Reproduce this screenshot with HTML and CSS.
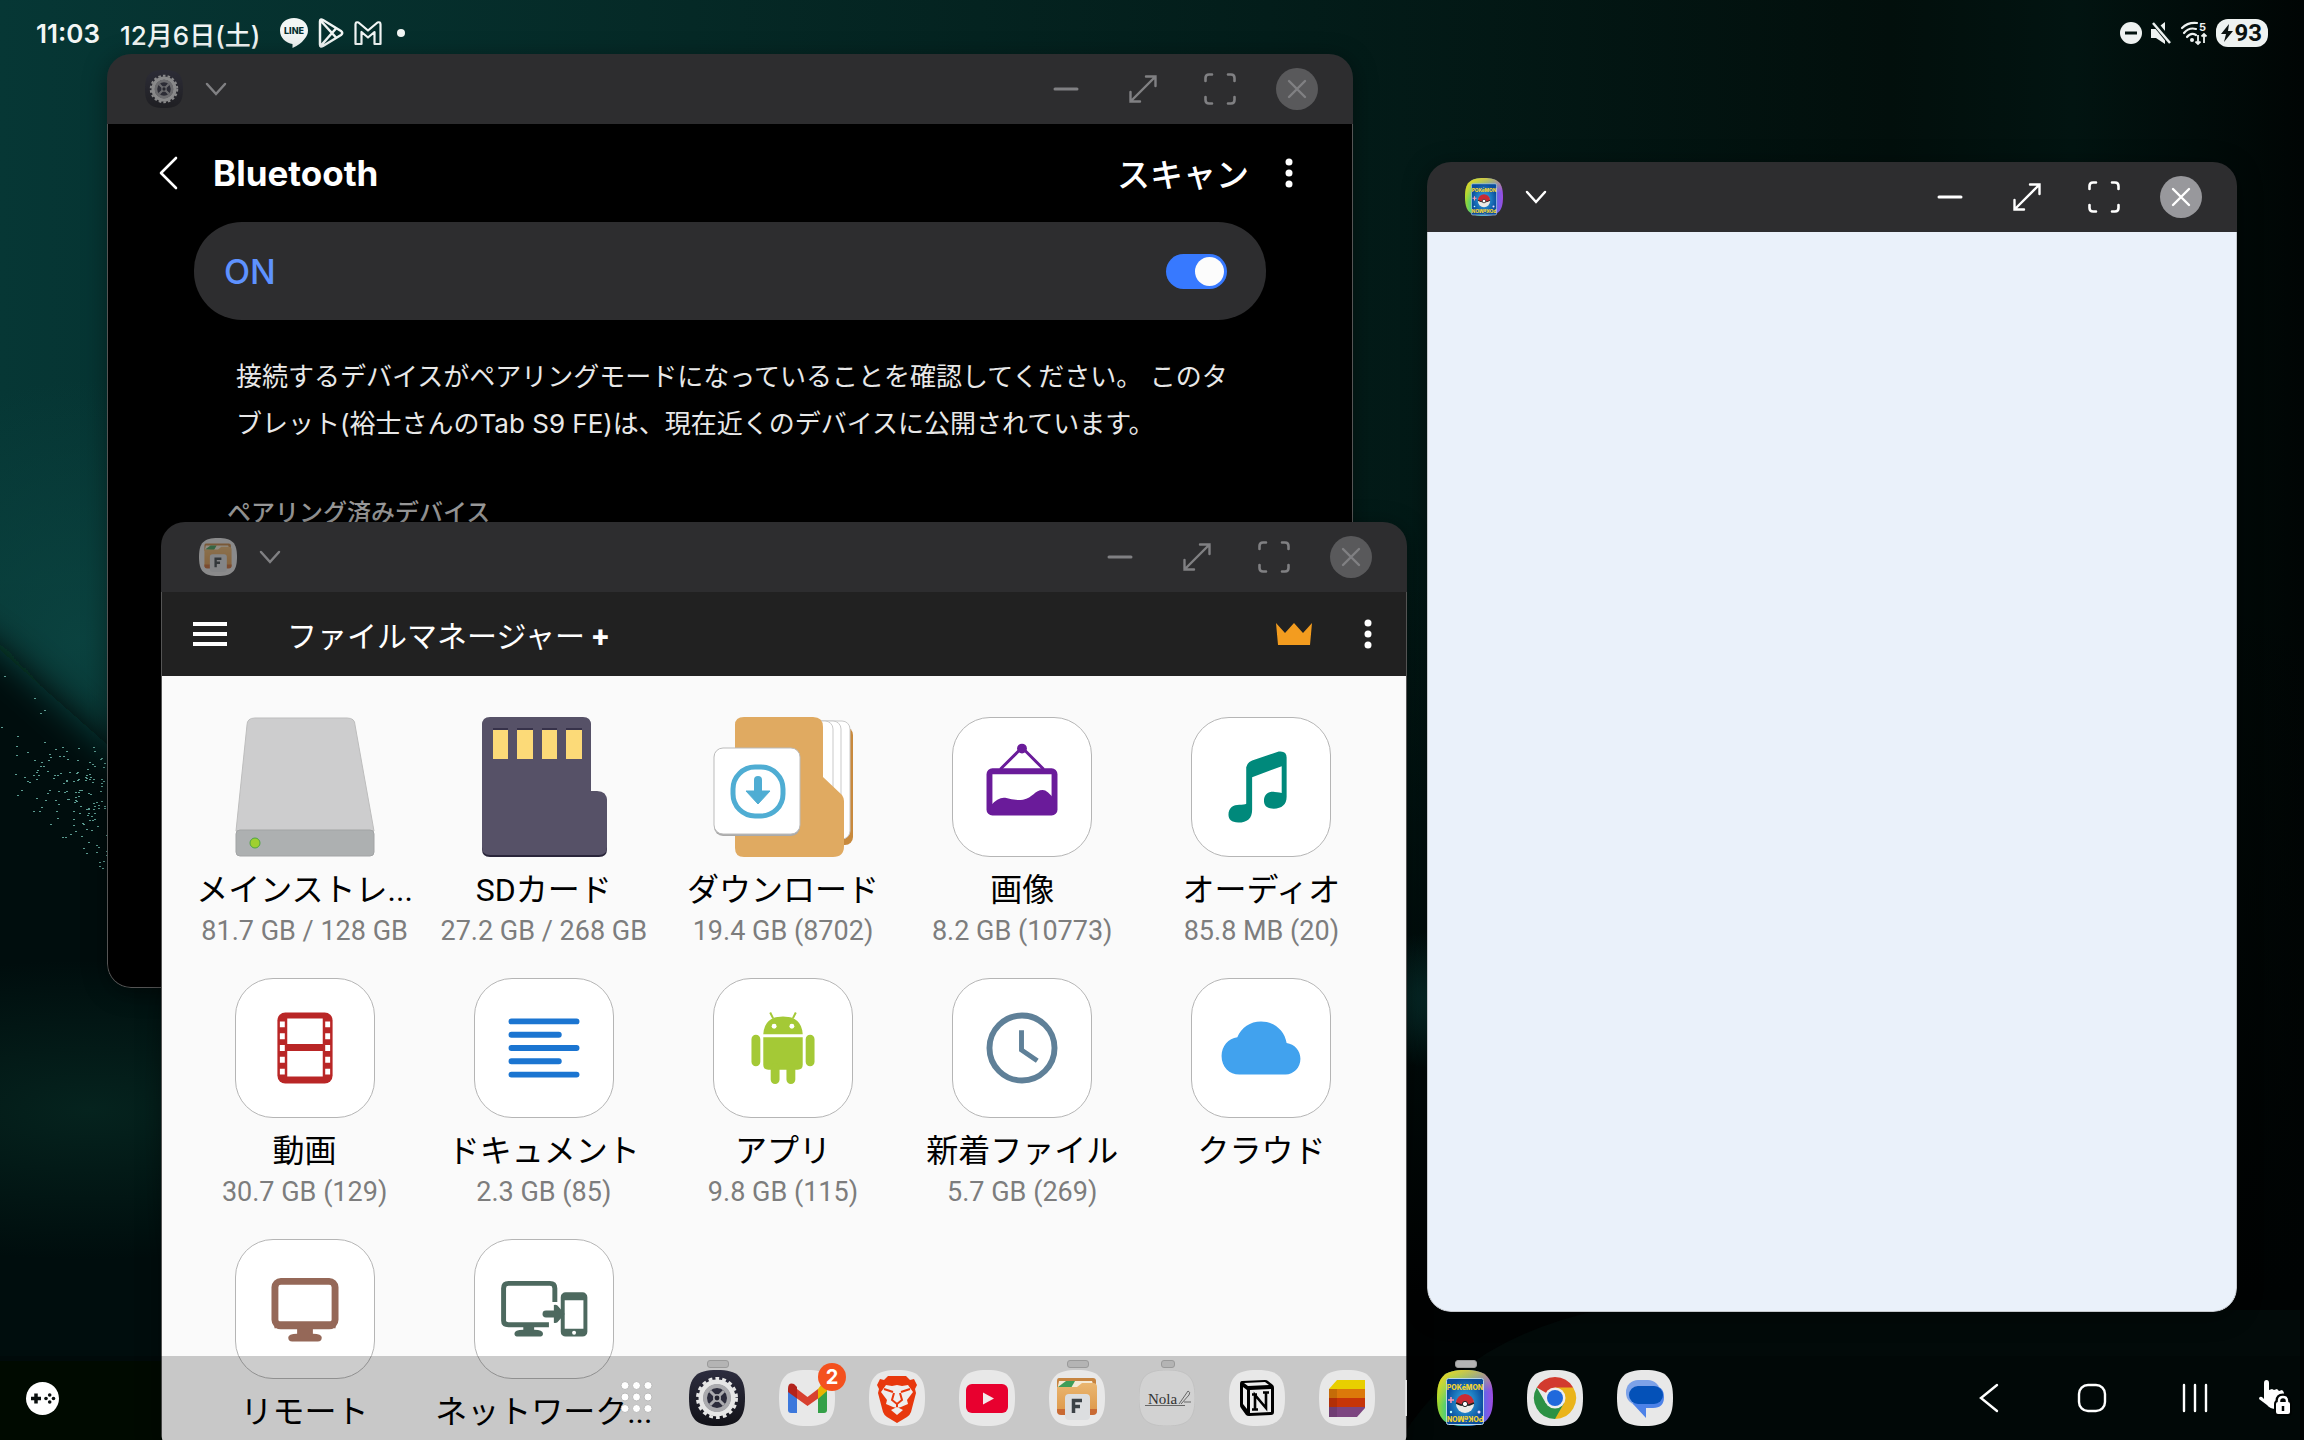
FILE: index.html
```
<!DOCTYPE html>
<html lang="ja">
<head>
    <meta charset="UTF-8">
    <meta name="viewport" content="width=device-width, initial-scale=1.0">
    <title>Tablet Desktop</title>
    <link rel="stylesheet" href="styles.css">
</head>
<body>
    <!-- shared icons -->
    <svg class="defs" aria-hidden="true">
        <defs>
            <linearGradient id="rainbow">
                <stop offset="0" stop-color="#9fd82a"/>
                <stop offset="0.25" stop-color="#22c9a4"/>
                <stop offset="0.75" stop-color="#3f74ee"/>
                <stop offset="1" stop-color="#a04be0"/>
            </linearGradient>
            <linearGradient id="sun" x1="0" y1="0" x2="0.3" y2="1">
                <stop offset="0" stop-color="#ffd21c"/>
                <stop offset="0.6" stop-color="#ffe021" stop-opacity="0"/>
            </linearGradient>
            <radialGradient id="cardBlue">
                <stop offset="0" stop-color="#35b5ec"/>
                <stop offset="1" stop-color="#0b4d9d"/>
            </radialGradient>
            <linearGradient id="navy" x1="0" y1="0" x2="0" y2="1">
                <stop offset="0" stop-color="#2d2d3f"/>
                <stop offset="1" stop-color="#121218"/>
            </linearGradient>
            <linearGradient id="folder" x1="0" y1="0" x2="0" y2="1">
                <stop offset="0" stop-color="#eab670"/>
                <stop offset="1" stop-color="#dd9748"/>
            </linearGradient>
        </defs>

        <symbol id="squircle" viewBox="0 0 56 56">
            <path d="M28 0C49 0 56 7 56 28S49 56 28 56 0 49 0 28 7 0 28 0z"/>
        </symbol>
        <symbol id="app-settings" viewBox="0 0 56 56">
            <use href="#squircle" fill="url(#navy)"/>
            <circle cx="28" cy="28" r="19.5" fill="none" stroke="#e6e6e6" stroke-width="3" stroke-dasharray="3.8 3.1"/>
            <circle cx="28" cy="28" r="16" fill="none" stroke="#e6e6e6" stroke-width="5"/>
            <circle cx="28" cy="28" r="12" fill="#2c2c3c" stroke="#aaaaae" stroke-width="4"/>
            <path d="M21 21l14 14M35 21L21 35" stroke="#aaaaae" stroke-width="3"/>
            <circle cx="28" cy="28" r="4" fill="#aaaaae"/>
            <circle cx="28" cy="28" r="2.4" fill="#22222e"/>
        </symbol>
        <symbol id="app-files" viewBox="0 0 56 56">
            <use href="#squircle" fill="#e8e8e8"/>
            <path d="M10 8h34q3 0 3 3v8H8v-8q0-3 2-3z" fill="#c68440"/>
            <path d="M10 11h33l3 10H8z" fill="#f4ead6"/>
            <path d="M9 17l8-6h9l-4 7z" fill="#3f9d58"/>
            <path d="M8 17h20l5-4h11q4 0 4 4v23q0 4-4 4H12q-4 0-4-4z" fill="url(#folder)"/>
            <path d="M8 39h40v2q0 4-4 4H12q-4 0-4-4z" fill="#c96a33"/>
            <rect x="16" y="24" width="25" height="26" rx="4" fill="#dcdee0"/>
            <path d="M24.500 43V30.500H33M24.500 36.500H31" fill="none" stroke="#3b4247" stroke-width="3.500"/>
        </symbol>
        <symbol id="app-cards" viewBox="0 0 56 56">
            <use href="#squircle" fill="url(#rainbow)"/>
            <use href="#squircle" fill="url(#sun)"/>
            <rect x="9.500" y="8.500" width="37" height="46" rx="2" fill="url(#cardBlue)" stroke="#b9d6e8"/>
            <circle cx="28" cy="34" r="9" fill="#eceae6"/>
            <path d="M19 33a9 9 0 0 1 18 0q-9 4-18 0z" fill="#c92b33"/>
            <path d="M19 33q9 5 18 0" fill="none" stroke="#222" stroke-width="1.500"/>
            <circle cx="28" cy="34" r="2.600" fill="#fff" stroke="#222"/>
            <path d="M14 27v6M11 30h6" stroke="#ff9cb6" stroke-width="1.500"/>
            <circle cx="42" cy="42" r="1.500" fill="#e7d6ff"/>
            <circle cx="14" cy="42" r="1.200" fill="#bff"/>
        </symbol>
        <symbol id="chevron-down" viewBox="0 0 22 14">
            <path d="M2 2l9 10 9-10" fill="none" stroke="currentColor" stroke-width="2.500" stroke-linecap="round"/>
        </symbol>
        <symbol id="minimize" viewBox="0 0 42 42">
            <path d="M10 21h22" stroke="currentColor" stroke-width="3" stroke-linecap="round"/>
        </symbol>
        <symbol id="resize" viewBox="0 0 42 42">
            <path d="M8.500 33.500l25-25M24 8.500h9.500V18M8.500 24v9.500H18" fill="none" stroke="currentColor" stroke-width="2.400" stroke-linecap="round"/>
        </symbol>
        <symbol id="fullscreen" viewBox="0 0 42 42">
            <path d="M6.500 13V10q0-3.500 3.500-3.500h3M29 6.500h3q3.500 0 3.500 3.500v3M35.500 29v3q0 3.500-3.500 3.500h-3M13 35.500h-3q-3.500 0-3.500-3.500v-3" fill="none" stroke="currentColor" stroke-width="2.600" stroke-linecap="round"/>
        </symbol>
        <symbol id="close" viewBox="0 0 42 42">
            <path d="M13 13l16 16M29 13L13 29" stroke="currentColor" stroke-width="2.400" stroke-linecap="round"/>
        </symbol>
        <symbol id="more" viewBox="0 0 10 32">
            <circle cx="5" cy="5" r="3.500"/>
            <circle cx="5" cy="16" r="3.500"/>
            <circle cx="5" cy="27" r="3.500"/>
        </symbol>
    </svg>

    <!-- wallpaper -->
    <svg class="wallpaper" viewBox="0 0 2304 1440" preserveAspectRatio="xMinYMin slice" aria-hidden="true">
        <defs>
            <linearGradient id="bgBase" x1="0" y1="0" x2="1" y2="0">
                <stop offset="0" stop-color="#063735"/>
                <stop offset="0.3" stop-color="#052926"/>
                <stop offset="0.55" stop-color="#031d1a"/>
                <stop offset="0.82" stop-color="#020f0c"/>
                <stop offset="0.9" stop-color="#021411"/>
                <stop offset="1" stop-color="#000504"/>
            </linearGradient>
            <linearGradient id="bgFade" x1="0" y1="0" x2="0" y2="1">
                <stop offset="0.4" stop-color="#000303" stop-opacity="0"/>
                <stop offset="0.9" stop-color="#000303"/>
            </linearGradient>
            <linearGradient id="bgEdge" x1="0" y1="0" x2="0" y2="1">
                <stop offset="0" stop-color="#02120f"/>
                <stop offset="1" stop-color="#000504"/>
            </linearGradient>
            <radialGradient id="bgTeal">
                <stop offset="0" stop-color="#0b4441" stop-opacity="0.9"/>
                <stop offset="1" stop-color="#0b4441" stop-opacity="0"/>
            </radialGradient>
            <radialGradient id="bgLow">
                <stop offset="0" stop-color="#05231e"/>
                <stop offset="1" stop-color="#05231e" stop-opacity="0"/>
            </radialGradient>
            <filter id="soft" x="-50%" y="-50%" width="200%" height="200%"><feGaussianBlur stdDeviation="18"/></filter>
        </defs>
        <rect width="2304" height="1440" fill="url(#bgBase)"/>
        <rect width="2304" height="1440" fill="url(#bgFade)"/>
        <ellipse cx="80" cy="640" rx="260" ry="260" fill="url(#bgTeal)"/>
        <path d="M-60 610L0 650 170 800 500 1000V1600H-60z" fill="url(#bgEdge)" filter="url(#soft)"/>
        <ellipse cx="90" cy="1110" rx="380" ry="150" fill="url(#bgLow)"/>
        <ellipse cx="1450" cy="1000" rx="110" ry="70" fill="url(#bgTeal)" opacity="0.8"/>
        <path d="M1400 1440q60-100 200-130h700v130z" fill="#03110f" opacity="0.5"/>
        <path id="sparks" fill="#5c9d92"/>
    </svg>

    <header class="status-bar">
        <div class="status-left">
            <time>11:03</time>
            <span>12月6日(土)</span>
            <div class="notice-icons">
                <svg width="28" height="36" viewBox="0 0 28 36" role="img" aria-label="LINE">
                    <path d="M14 3C6 3 0 8 0 15.500S6 28 12.500 29v4q8-3.500 12-9 3.500-4 3.500-8.500C28 8 22 3 14 3z" fill="#f2f6f5"/>
                    <text x="14" y="19" text-anchor="middle" class="line-logo">LINE</text>
                </svg>
                <svg width="28" height="36" viewBox="0 0 28 36" role="img" aria-label="Play">
                    <path d="M3 6.500q0-3 3-1.500l18 11q2.500 2 0 4L6 31q-3 1.500-3-1.500zM4 6l15 16.500M4 30.500l15-17" fill="none" stroke="#f2f6f5" stroke-width="2.500" stroke-linejoin="round"/>
                </svg>
                <svg width="28" height="36" viewBox="0 0 28 36" role="img" aria-label="Gmail">
                    <path d="M1.500 9.500q0-3 3-2L14 15.500l9.500-8q3-1 3 2V29h-6V17L14 22.500 7.500 17v12h-6z" fill="none" stroke="#f2f6f5" stroke-width="2.200" stroke-linejoin="round"/>
                </svg>
                <svg width="8" height="36" viewBox="0 0 8 36" aria-hidden="true"><circle cx="4" cy="18" r="4" fill="#f2f6f5"/></svg>
            </div>
        </div>
        <div class="status-right">
            <svg width="22" height="28" viewBox="0 0 22 28" role="img" aria-label="通知オフ">
                <circle cx="11" cy="14" r="11" fill="#eef2f1"/>
                <path d="M5 14h12" stroke="#02120f" stroke-width="3"/>
            </svg>
            <svg width="22" height="28" viewBox="0 0 22 28" role="img" aria-label="ミュート">
                <path d="M1 10h5l9-7v22l-9-6H1z" fill="#eef2f1"/>
                <path d="M3 2l18 22" stroke="#02120f" stroke-width="6"/>
                <path d="M3 4l17 20" stroke="#eef2f1" stroke-width="2.500"/>
            </svg>
            <svg width="28" height="28" viewBox="0 0 28 28" role="img" aria-label="Wi-Fi">
                <path d="M2 9Q8 3 17 4M4 14q5-6 12-4M7 18q4-5 9-2" fill="none" stroke="#eef2f1" stroke-width="2.200" stroke-linecap="round"/>
                <circle cx="12" cy="21" r="2" fill="#eef2f1"/>
                <path d="M18 16v9M15.500 22.500L18 25l2.500-2.500M24 24v-9M21.500 17.500L24 15l2.500 2.500" fill="none" stroke="#eef2f1" stroke-width="1.800"/>
                <text x="19" y="12" class="wifi-gen">5</text>
            </svg>
            <div class="battery">
                <svg width="14" height="20" viewBox="0 0 14 20" aria-hidden="true"><path d="M9 1L1 11h5L4 19l9-11H8z" fill="#0a1211"/></svg>
                <span>93</span>
            </div>
        </div>
    </header>

    <section class="window bluetooth">
        <div class="title-bar">
            <svg class="app-mark"><use href="#app-settings"/></svg>
            <button class="chevron" type="button" aria-label="メニュー"><svg><use href="#chevron-down"/></svg></button>
            <div class="controls">
                <button type="button" aria-label="最小化"><svg><use href="#minimize"/></svg></button>
                <button type="button" aria-label="サイズ変更"><svg><use href="#resize"/></svg></button>
                <button type="button" aria-label="全画面"><svg><use href="#fullscreen"/></svg></button>
                <button type="button" class="close" aria-label="閉じる"><svg><use href="#close"/></svg></button>
            </div>
        </div>
        <div class="window-body">
            <div class="bt-header">
                <button type="button" aria-label="戻る">
                    <svg width="20" height="34" viewBox="0 0 20 34"><path d="M18 2L3 17l15 15" fill="none" stroke="#fff" stroke-width="2.600" stroke-linecap="round" stroke-linejoin="round"/></svg>
                </button>
                <h1>Bluetooth</h1>
                <button type="button" class="scan">スキャン</button>
                <button type="button" class="more" aria-label="その他"><svg><use href="#more"/></svg></button>
            </div>
            <div class="bt-switch">
                <label for="btToggle">ON</label>
                <input type="checkbox" id="btToggle" checked>
            </div>
            <p class="bt-note">接続するデバイスがペアリングモードになっていることを確認してください。 このタブレット(裕士さんのTab S9 FE)は、現在近くのデバイスに公開されています。</p>
            <h2>ペアリング済みデバイス</h2>
        </div>
    </section>

    <section class="window files">
        <div class="title-bar">
            <svg class="app-mark"><use href="#app-files"/></svg>
            <button class="chevron" type="button" aria-label="メニュー"><svg><use href="#chevron-down"/></svg></button>
            <div class="controls">
                <button type="button" aria-label="最小化"><svg><use href="#minimize"/></svg></button>
                <button type="button" aria-label="サイズ変更"><svg><use href="#resize"/></svg></button>
                <button type="button" aria-label="全画面"><svg><use href="#fullscreen"/></svg></button>
                <button type="button" class="close" aria-label="閉じる"><svg><use href="#close"/></svg></button>
            </div>
        </div>
        <div class="window-body">
            <div class="app-bar">
                <button type="button" aria-label="ナビゲーション">
                    <svg width="34" height="26" viewBox="0 0 34 26"><path d="M0 3h34M0 13h34M0 23h34" stroke="#fff" stroke-width="4"/></svg>
                </button>
                <h1>ファイルマネージャー <b>+</b></h1>
                <button type="button" class="crown" aria-label="プレミアム">
                    <svg width="36" height="24" viewBox="0 0 36 24"><path d="M0 1l9 10 9-10 9 10 9-10-2 22H2z" fill="#f39c1f"/></svg>
                </button>
                <button type="button" class="more" aria-label="その他"><svg><use href="#more"/></svg></button>
            </div>
            <div class="tiles">
                <a href="#" class="tile">
                    <svg class="art" viewBox="0 0 140 140">
                        <path d="M20 1h92q8 0 8 7l19 106H1L12 8q0-7 8-7z" fill="#cdcdce" stroke="#bdbdbd"/>
                        <rect x="1" y="113" width="138" height="26" rx="4" fill="#adb0b1" stroke="#a2a4a5"/>
                        <circle cx="20" cy="126" r="5" fill="#9fd030" stroke="#4fa544"/>
                    </svg>
                    <span class="name">メインストレ...</span>
                    <span class="size">81.7 GB / 128 GB</span>
                </a>
                <a href="#" class="tile">
                    <svg class="art" viewBox="0 0 140 140">
                        <path d="M8 10q0-8 8-8h93q8 0 8 8v66h6q10 0 10 10v46q0 8-8 8H16q-8 0-8-8z" fill="#29253a"/>
                        <path d="M8 8q0-8 8-8h93q8 0 8 8v66h6q10 0 10 10v46q0 8-8 8H16q-8 0-8-8z" fill="#565167"/>
                        <path d="M19 11h15v5H19zM43 11h16v5H43zM68 11h15v5H68zM92 11h16v5H92z" fill="#37324a"/>
                        <path d="M19 13h15v29H19zM43 13h16v29H43zM68 13h15v29H68zM92 13h16v29H92z" fill="#fcda78"/>
                    </svg>
                    <span class="name">SDカード</span>
                    <span class="size">27.2 GB / 268 GB</span>
                </a>
                <a href="#" class="tile">
                    <svg class="art" viewBox="0 0 140 140">
                        <rect x="100" y="10" width="40" height="118" rx="8" fill="#c8893c"/>
                        <rect x="80" y="4" width="57" height="118" rx="8" fill="#fff" stroke="#c9c9c9"/>
                        <rect x="75" y="4" width="53" height="118" rx="8" fill="#fff" stroke="#c9c9c9"/>
                        <rect x="70" y="4" width="50" height="118" rx="8" fill="#fff" stroke="#c9c9c9"/>
                        <path d="M22 8q0-8 9-8h69q10 0 10 10v50l19 18q2 3 2 6v45q0 11-11 11H31q-9 0-9-9z" fill="#e0aa61"/>
                        <rect x="1" y="32" width="86" height="87" rx="9" fill="#aaa"/>
                        <rect x="1" y="31" width="86" height="86" rx="9" fill="#fff" stroke="#bbb"/>
                        <rect x="20" y="50" width="50" height="49" rx="22" fill="none" stroke="#4fadd3" stroke-width="5"/>
                        <path d="M45 60v20M33 74h24L45 87z" fill="#4fadd3" stroke="#4fadd3"/>
                        <path d="M45 63v12" stroke="#4fadd3" stroke-width="8" stroke-linecap="round"/>
                    </svg>
                    <span class="name">ダウンロード</span>
                    <span class="size">19.4 GB (8702)</span>
                </a>
                <a href="#" class="tile">
                    <svg class="art framed" viewBox="0 0 140 140">
                        <path d="M48 52l22-22 22 22" fill="none" stroke="#6a1b9a" stroke-width="3"/>
                        <circle cx="70" cy="31" r="5" fill="#6a1b9a"/>
                        <rect x="37" y="54" width="66" height="42" rx="3" fill="none" stroke="#6a1b9a" stroke-width="6"/>
                        <path d="M38 89q8-9 15-8 9 3 18 2c10-2 12-10 20-10q5 0 12 10v13H38z" fill="#6a1b9a"/>
                    </svg>
                    <span class="name">画像</span>
                    <span class="size">8.2 GB (10773)</span>
                </a>
                <a href="#" class="tile">
                    <svg class="art framed" viewBox="0 0 140 140">
                        <path d="M55 50q1-5 6-7l27-9q8-1 8 6v40c0 8-5 12-13 12-7 0-10-3-10-8 0-7 5-10 11-9 4 0 6 1 7 1V49L61 60v33c0 9-5 13-14 13-7 0-10-3-10-8 0-7 5-10 11-10 3 0 6 0 7-1z" fill="#00897b"/>
                    </svg>
                    <span class="name">オーディオ</span>
                    <span class="size">85.8 MB (20)</span>
                </a>
                <a href="#" class="tile">
                    <svg class="art framed" viewBox="0 0 140 140">
                        <rect x="42" y="34" width="56" height="72" rx="8" fill="#b92626"/>
                        <path d="M52 40h36v26H52zM52 73h36v26H52z" fill="#fff"/>
                        <path d="M47 43v54M93 43v54" stroke="#fff" stroke-width="5" stroke-dasharray="6 6"/>
                    </svg>
                    <span class="name">動画</span>
                    <span class="size">30.7 GB (129)</span>
                </a>
                <a href="#" class="tile">
                    <svg class="art framed" viewBox="0 0 140 140">
                        <path d="M37 43h66M37 56.500h48M37 70h66M37 83.500h48M37 97h66" stroke="#1b75d1" stroke-width="6" stroke-linecap="round"/>
                    </svg>
                    <span class="name">ドキュメント</span>
                    <span class="size">2.3 GB (85)</span>
                </a>
                <a href="#" class="tile">
                    <svg class="art framed" viewBox="0 0 140 140">
                        <path d="M60 40l-3-6M80 40l3-6" stroke="#a4c936" stroke-width="2"/>
                        <path d="M50 56q1-18 20-18t20 18z" fill="#a4c936"/>
                        <circle cx="61" cy="48" r="2.500" fill="#fff"/>
                        <circle cx="79" cy="48" r="2.500" fill="#fff"/>
                        <path d="M50 59h40v28q0 5-5 5H55q-5 0-5-5z" fill="#a4c936"/>
                        <path d="M42.500 61v23M97.500 61v23M62 90v12M78 90v12" stroke="#a4c936" stroke-width="9" stroke-linecap="round"/>
                    </svg>
                    <span class="name">アプリ</span>
                    <span class="size">9.8 GB (115)</span>
                </a>
                <a href="#" class="tile">
                    <svg class="art framed" viewBox="0 0 140 140">
                        <circle cx="70" cy="70" r="33" fill="none" stroke="#5f8098" stroke-width="6"/>
                        <path d="M69.500 52v20l16 11" fill="none" stroke="#5f8098" stroke-width="5"/>
                    </svg>
                    <span class="name">新着ファイル</span>
                    <span class="size">5.7 GB (269)</span>
                </a>
                <a href="#" class="tile">
                    <svg class="art framed" viewBox="0 0 140 140">
                        <path d="M48 97c-10 0-18-8-18-19 0-10 7-18 16-19 4-10 13-16 24-16 13 0 24 9 26 22 8 1 14 8 14 16 0 9-7 16-15 16z" fill="#41a2ee"/>
                    </svg>
                    <span class="name">クラウド</span>
                </a>
                <a href="#" class="tile">
                    <svg class="art framed" viewBox="0 0 140 140">
                        <rect x="39.500" y="42" width="61" height="45" rx="6" fill="none" stroke="#956858" stroke-width="7"/>
                        <path d="M62 89h16v6q9 0 9 4t-4 4H57q-4 0-4-4t9-4z" fill="#956858"/>
                        <path d="M39 86h62" stroke="#956858" stroke-width="7"/>
                    </svg>
                    <span class="name">リモート</span>
                </a>
                <a href="#" class="tile">
                    <svg class="art framed" viewBox="0 0 140 140">
                        <path d="M81 63V49q0-5-5-5H34q-5 0-5 5v33q0 4 5 4h41" fill="none" stroke="#4d695f" stroke-width="5"/>
                        <path d="M49 87h11v4q9 0 9 4 0 3-4 3H44q-4 0-4-3 0-4 9-4z" fill="#4d695f"/>
                        <rect x="89" y="55" width="23" height="41" rx="3" fill="#fff" stroke="#4d695f" stroke-width="4"/>
                        <path d="M88 58h24M88 93h24" stroke="#4d695f" stroke-width="6"/>
                        <circle cx="100.500" cy="94" r="2" fill="#fff"/>
                        <path d="M72 75h10" stroke="#4d695f" stroke-width="7" stroke-linecap="round"/>
                        <path d="M80 66q3-1 5 2l6 7-6 7q-2 3-5 2z" fill="#4d695f"/>
                    </svg>
                    <span class="name">ネットワーク...</span>
                </a>
            </div>
        </div>
    </section>

    <section class="window game active">
        <div class="title-bar">
            <svg class="app-mark" viewBox="0 0 56 56">
                <use href="#app-cards"/>
                <text x="28" y="20" text-anchor="middle" class="card-logo">POKéMON</text>
                <text x="-28" y="-46" text-anchor="middle" class="card-logo" transform="rotate(180)">POKéMON</text>
            </svg>
            <button class="chevron" type="button" aria-label="メニュー"><svg><use href="#chevron-down"/></svg></button>
            <div class="controls">
                <button type="button" aria-label="最小化"><svg><use href="#minimize"/></svg></button>
                <button type="button" aria-label="サイズ変更"><svg><use href="#resize"/></svg></button>
                <button type="button" aria-label="全画面"><svg><use href="#fullscreen"/></svg></button>
                <button type="button" class="close" aria-label="閉じる"><svg><use href="#close"/></svg></button>
            </div>
        </div>
        <div class="window-body"></div>
    </section>

    <nav class="taskbar">
        <button type="button" class="gamepad" aria-label="ゲーム">
            <svg width="33" height="33" viewBox="0 0 33 33">
                <circle cx="16.500" cy="16.500" r="16.500" fill="#fff"/>
                <path d="M5 16.500h10M10 11.500v10" stroke="#0a0f0e" stroke-width="3.500"/>
                <g fill="#0a0f0e"><circle cx="20" cy="16.500" r="1.800"/><circle cx="27.500" cy="16.500" r="1.800"/><circle cx="23.700" cy="13" r="1.800"/><circle cx="23.700" cy="20" r="1.800"/></g>
            </svg>
        </button>
        <div class="dock">
            <button type="button" aria-label="アプリ一覧">
                <svg width="36" height="36" viewBox="0 0 36 36" fill="#fff" stroke="#bababa">
                    <circle cx="6" cy="5.500" r="4"/><circle cx="17.500" cy="5.500" r="4"/><circle cx="29" cy="5.500" r="4"/>
                    <circle cx="6" cy="17" r="4"/><circle cx="17.500" cy="17" r="4"/><circle cx="29" cy="17" r="4"/>
                    <circle cx="6" cy="28.500" r="4"/><circle cx="17.500" cy="28.500" r="4"/><circle cx="29" cy="28.500" r="4"/>
                </svg>
            </button>
            <button type="button" class="app running" aria-label="設定"><svg><use href="#app-settings"/></svg></button>
            <button type="button" class="app" aria-label="Gmail">
                <svg viewBox="0 0 56 56">
                    <use href="#squircle" fill="#e8e8e8"/>
                    <path d="M9 19h9v24h-6q-3 0-3-3z" fill="#3c78dc"/>
                    <path d="M39 19h9v21q0 3-3 3h-6z" fill="#34a048"/>
                    <path d="M39 19l3-4q6-3 6 4v2l-9 8z" fill="#e8b400"/>
                    <path d="M18 19l10.500 8L39 19v9.500L28.500 36 18 28.500z" fill="#d8402f"/>
                    <path d="M9 19q0-7 6-5l3 3v11.500L9 22z" fill="#b3231c"/>
                </svg>
                <span class="badge">2</span>
            </button>
            <button type="button" class="app" aria-label="Brave">
                <svg viewBox="0 0 56 56">
                    <use href="#squircle" fill="#e8e8e8"/>
                    <path d="M19 6h18l4 4 4-1 3 6-2 4 1 4-5 19q-1 3-4 5l-10 6-10-6q-3-2-4-5L9 23l1-4-2-4 3-6 4 1z" fill="#e8380d"/>
                    <path d="M17 15l6 1 5-1 5 1 6-1 5 7-6 8 1 4-7 3-4 1-4-1-7-3 1-4-6-8z" fill="#eee"/>
                    <path d="M15 19l9 3M41 19l-9 3M25 23l-2 7 5 4 5-4-2-7M28 34v4" fill="none" stroke="#e8380d" stroke-width="2"/>
                    <path d="M22 40l6-3 6 3-6 5z" fill="#eee"/>
                </svg>
            </button>
            <button type="button" class="app" aria-label="YouTube">
                <svg viewBox="0 0 56 56">
                    <use href="#squircle" fill="#e8e8e8"/>
                    <rect x="7" y="14" width="42" height="29" rx="6" fill="#e8002f"/>
                    <path d="M24 22.500l11 6-11 6z" fill="#f3e9eb"/>
                </svg>
            </button>
            <button type="button" class="app running" aria-label="ファイルマネージャー"><svg><use href="#app-files"/></svg></button>
            <button type="button" class="app running small" aria-label="Nola">
                <svg viewBox="0 0 56 56">
                    <use href="#squircle" fill="#d2d2d2" stroke="#c2c2c2"/>
                    <text x="9" y="34" class="nola-logo">Nola</text>
                    <path d="M6 35.500h40M40 34l9-13q3 1 1 4L42 34M45 32h7" fill="none" stroke="#666"/>
                </svg>
            </button>
            <button type="button" class="app" aria-label="Notion">
                <svg viewBox="0 0 56 56">
                    <use href="#squircle" fill="#e8e8e8"/>
                    <path d="M13 11l23-1q2 0 3 1l5 4q1 1 1 3v24q0 3-3 3l-22 1q-2 0-3-1l-5-7q-1-1-1-3V14q0-3 2-3z" fill="#000"/>
                    <path d="M15 13l21-1 4 3-21 1zM14 17l4 3v19l-4-5zM21 20l21-1v23l-21 1z" fill="#eee"/>
                    <path d="M26 39V25l11 13V23M23 24.500h5M34 22.500h6M23 39.500h6" fill="none" stroke="#000" stroke-width="2.600"/>
                </svg>
            </button>
            <button type="button" class="app" aria-label="Lifebear">
                <svg viewBox="0 0 56 56">
                    <use href="#squircle" fill="#e8e8e8"/>
                    <path d="M10 19l8-9h28v9z" fill="#e8cf00"/>
                    <path d="M10 19h36v9H10z" fill="#dc790a"/>
                    <path d="M10 28h36v9H10z" fill="#c73508"/>
                    <path d="M10 37h36v1l-8 9H10z" fill="#7c4580"/>
                    <path d="M10 19h8v28h-8z" fill="#000" opacity="0.100"/>
                </svg>
            </button>
            <span class="divider"></span>
            <button type="button" class="app running" aria-label="カードゲーム">
                <svg viewBox="0 0 56 56">
                    <use href="#app-cards"/>
                    <text x="28" y="20" text-anchor="middle" class="card-logo">POKéMON</text>
                    <text x="-28" y="-46" text-anchor="middle" class="card-logo" transform="rotate(180)">POKéMON</text>
                </svg>
            </button>
            <button type="button" class="app" aria-label="Chrome">
                <svg viewBox="0 0 56 56">
                    <use href="#squircle" fill="#e8e8e8"/>
                    <path d="M28 28L9.800 17.500A21 21 0 0 1 46.200 17.500z" fill="#d23a2e"/>
                    <path d="M28 28L28 17.500H46.200A21 21 0 0 1 28 49z" fill="#eab41a"/>
                    <path d="M28 49A21 21 0 0 1 9.800 17.500L18.900 33.200 37 33.200z" fill="#2c9144"/>
                    <circle cx="28" cy="28" r="10.500" fill="#eee"/>
                    <circle cx="28" cy="28" r="8" fill="#2069dc"/>
                </svg>
            </button>
            <button type="button" class="app" aria-label="メッセージ">
                <svg viewBox="0 0 56 56">
                    <use href="#squircle" fill="#e8e8e8"/>
                    <rect x="9" y="10" width="34" height="25" rx="12" fill="#7da2e8"/>
                    <path d="M20 16h16q11 0 11 11t-11 11h-7v10L16 34z" fill="#4d82e8"/>
                    <rect x="12" y="16" width="34" height="18" rx="9" fill="#0451b8"/>
                </svg>
            </button>
        </div>
        <div class="system-nav">
            <button type="button" aria-label="戻る">
                <svg width="30" height="30" viewBox="0 0 30 30" fill="none" stroke="#fff" stroke-width="2.400" stroke-linecap="round"><path d="M23 2L7 15l16 13"/></svg>
            </button>
            <button type="button" aria-label="ホーム">
                <svg width="30" height="30" viewBox="0 0 30 30" fill="none" stroke="#fff" stroke-width="2.400"><rect x="2" y="2" width="26" height="26" rx="9"/></svg>
            </button>
            <button type="button" aria-label="履歴">
                <svg width="30" height="30" viewBox="0 0 30 30" fill="none" stroke="#fff" stroke-width="2.400" stroke-linecap="round"><path d="M4 2v26M15 2v26M26 2v26"/></svg>
            </button>
            <button type="button" class="touch-lock" aria-label="タッチロック">
                <svg width="34" height="38" viewBox="0 0 34 38">
                    <path d="M6 4q0-3 2.500-3T11 4v7l3-1 2 1 3-1 2 2 3-1q3 2 2 8l-8 11q-6 0-9-4L1 20q0-3 3-2l2 2z" fill="#fff"/>
                    <path d="M21 25v-3q0-4 4-4t4 4v3" fill="none" stroke="#000403" stroke-width="7"/>
                    <rect x="17" y="22" width="16" height="14" rx="3" fill="#fff" stroke="#000403" stroke-width="2"/>
                    <path d="M21 25v-3q0-4 4-4t4 4v3" fill="none" stroke="#fff" stroke-width="2.500"/>
                    <path d="M25 27v5" stroke="#000403" stroke-width="2.500"/>
                </svg>
            </button>
        </div>
    </nav>

    <script>
        // scatter the sparks along the lower edge of the teal glow
        let seed = 11;
        function rand() {
            seed = (seed * 16807) % 2147483647;
            return seed / 2147483647;
        }

        let d = '';
        for (let i = 0; i < 210; i++) {
            const x = Math.round(Math.sqrt(rand()) * 125);
            const spread = (rand() + rand() - 1) * 75;
            const y = Math.round(745 + x * 0.6 + spread);
            d += `M${x} ${y}h2v1h-2z`;
        }
        document.getElementById('sparks').setAttribute('d', d);
    </script>
</body>
</html>
```
FILE: styles.css
```
* {
    box-sizing: border-box;
}

body {
    position: relative;
    min-height: 100vh;
    margin: 0;
    overflow: hidden;
    background-color: #000403;
    font-family: Inter, "Noto Sans CJK JP", sans-serif;
    color: #ffffff;
}

button {
    padding: 0;
    border: none;
    background: none;
    color: inherit;
    font: inherit;
    cursor: pointer;
}

svg {
    display: block;
}

h1, h2, p {
    margin: 0;
}

.defs {
    position: absolute;
    width: 0;
    height: 0;
}

.wallpaper {
    position: absolute;
    width: 100%;
    height: 100%;
}

/* status bar */
.status-bar {
    position: relative;
    display: flex;
    align-items: center;
    justify-content: space-between;
    height: 54px;
    padding: 12px 36px 0;
    font-size: 26px;
    font-weight: 600;
    color: #f2f6f5;
}

.status-left {
    display: flex;
    align-items: center;
    gap: 20px;
}

.status-left span {
    font-weight: 500;
}

.notice-icons {
    display: flex;
    gap: 9px;
}

.notice-icons svg:last-child {
    margin-left: 6px;
}

.line-logo {
    font-size: 9px;
    font-weight: 800;
    fill: #06302e;
}

.status-right {
    display: flex;
    align-items: center;
    gap: 8px;
}

.wifi-gen {
    font-size: 11px;
    font-weight: 700;
    fill: #eef2f1;
}

.battery {
    display: flex;
    align-items: center;
    height: 28px;
    padding: 0 6px 0 4px;
    border-radius: 12px;
    background-color: #eef2f1;
    color: #0a1211;
    font-family: Roboto, sans-serif;
    font-size: 24px;
    font-weight: 700;
}

/* windows */
.window {
    position: absolute;
    display: flex;
    flex-direction: column;
    overflow: hidden;
    border-radius: 24px;
    box-shadow: 0 4px 24px rgba(0, 0, 0, 0.4);
}

.title-bar {
    display: flex;
    flex-shrink: 0;
    align-items: center;
    height: 70px;
    padding: 0 35px 0 38px;
    background-color: #2d2d2f;
    color: #808083;
}

.app-mark {
    width: 38px;
    height: 38px;
    opacity: 0.5;
}

.chevron {
    margin-left: 22px;
}

.chevron svg {
    width: 22px;
    height: 14px;
}

.controls {
    display: flex;
    gap: 35px;
    margin-left: auto;
}

.controls svg {
    width: 42px;
    height: 42px;
}

.close {
    border-radius: 50%;
    background-color: #59595b;
}

.active .title-bar {
    color: #ffffff;
}

.active .app-mark {
    opacity: 1;
}

.active .close {
    background-color: #98989c;
}

.window-body {
    flex: 1;
    border: 1px solid #555555;
    border-top: none;
    border-radius: 0 0 24px 24px;
}

.more svg {
    width: 10px;
    height: 32px;
    fill: #ffffff;
}

/* bluetooth */
.bluetooth {
    top: 54px;
    left: 107px;
    width: 1246px;
    height: 934px;
}

.bluetooth .window-body {
    background-color: #000000;
}

.bt-header {
    display: flex;
    align-items: center;
    height: 98px;
    padding: 0 58px 0 50px;
}

.bt-header h1 {
    flex: 1;
    margin-left: 35px;
    font-size: 35px;
    font-weight: 700;
}

.scan {
    margin-right: 35px;
    font-size: 33px;
    font-weight: 500;
}

.bt-switch {
    display: flex;
    align-items: center;
    justify-content: space-between;
    height: 98px;
    margin: 0 86px;
    padding: 0 39px 0 30px;
    border-radius: 48px;
    background-color: #2d2d2f;
}

.bt-switch label {
    font-size: 34px;
    font-weight: 500;
    color: #5e92ff;
}

.bt-switch input {
    appearance: none;
    width: 61px;
    height: 35px;
    margin: 0;
    padding: 3px;
    border-radius: 18px;
    background-color: #3779ff;
    cursor: pointer;
}

.bt-switch input::before {
    content: "";
    display: block;
    width: 29px;
    height: 29px;
    margin-left: auto;
    border-radius: 50%;
    background-color: #fcfcfc;
}

.bt-note {
    margin: 33px 120px 0 128px;
    font-size: 26px;
    line-height: 47px;
    color: #e8e8e8;
}

.bluetooth h2 {
    margin: 48px 0 0 119px;
    font-size: 24px;
    font-weight: 500;
    line-height: 36px;
    color: #999999;
}

/* file manager */
.files {
    top: 522px;
    left: 161px;
    width: 1246px;
    height: 934px;
    font-family: Roboto, "Noto Sans CJK JP", sans-serif;
}

.files .window-body {
    background-color: #fafafa;
}

.app-bar {
    display: flex;
    align-items: center;
    height: 84px;
    padding: 0 33px 0 31px;
    background-color: #212121;
}

.app-bar h1 {
    flex: 1;
    margin-left: 60px;
    font-size: 30px;
    font-weight: 400;
}

.crown {
    margin-right: 51px;
}

.tiles {
    display: grid;
    grid-template-columns: repeat(5, 1fr);
    row-gap: 30px;
    padding: 41px 25px 41px 23px;
}

.tile {
    display: flex;
    flex-direction: column;
    align-items: center;
    color: #000000;
    text-decoration: none;
}

.art {
    width: 140px;
    height: 140px;
    margin-bottom: 9px;
}

.framed {
    border: 1px solid #b5b5b5;
    border-radius: 38px;
    background-color: #ffffff;
}

.name {
    font-size: 32px;
    line-height: 48px;
    white-space: nowrap;
}

.size {
    font-size: 27px;
    line-height: 34px;
    color: #7d7d7d;
}

/* card game */
.game {
    top: 162px;
    right: 67px;
    width: 810px;
    height: 1150px;
}

.game .window-body {
    border-color: #c4c8cd;
    background-color: #eaf1fa;
}

.card-logo {
    font-size: 7px;
    font-weight: 800;
    fill: #f5d32e;
}

/* taskbar */
.taskbar {
    position: absolute;
    right: 0;
    bottom: 0;
    left: 0;
    display: grid;
    grid-template-columns: 1fr auto 1fr;
    align-items: center;
    height: 84px;
    padding-right: 12px;
    background-color: rgba(0, 0, 0, 0.2);
}

.gamepad {
    justify-self: start;
    margin-left: 26px;
}

.dock {
    display: flex;
    align-items: center;
    gap: 34px;
}

.app {
    position: relative;
}

.app svg {
    width: 56px;
    height: 56px;
}

.running::before {
    content: "";
    position: absolute;
    top: -10px;
    left: 18px;
    width: 20px;
    height: 6px;
    border: 1px solid #9a9a9a;
    border-radius: 3px;
    background-color: #b4b4b4;
}

.small::before {
    left: 22px;
    width: 12px;
}

.badge {
    position: absolute;
    top: -7px;
    right: -11px;
    width: 28px;
    height: 28px;
    border-radius: 50%;
    background-color: #f4511e;
    font-size: 20px;
    font-weight: 700;
    line-height: 28px;
    text-align: center;
}

.nola-logo {
    font-family: "Liberation Serif", serif;
    font-size: 15px;
    fill: #333333;
}

.divider {
    width: 2px;
    height: 36px;
    margin: 0 -4px;
    background-color: #e0e0e0;
}

.system-nav {
    display: flex;
    align-items: center;
    justify-self: end;
    gap: 73px;
}

.touch-lock {
    margin-left: -25px;
}
```
